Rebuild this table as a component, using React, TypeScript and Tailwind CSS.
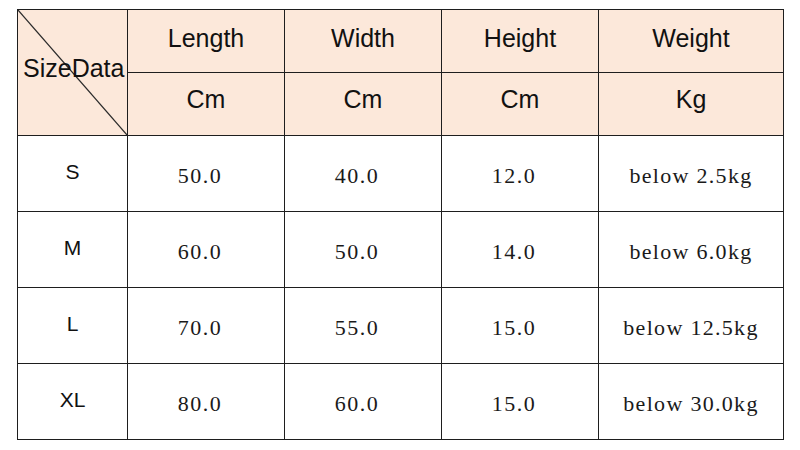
import React from "react";

type Row = { size: string; length: string; width: string; height: string; weight: string };

const rows: Row[] = [
  { size: "S", length: "50.0", width: "40.0", height: "12.0", weight: "below 2.5kg" },
  { size: "M", length: "60.0", width: "50.0", height: "14.0", weight: "below 6.0kg" },
  { size: "L", length: "70.0", width: "55.0", height: "15.0", weight: "below 12.5kg" },
  { size: "XL", length: "80.0", width: "60.0", height: "15.0", weight: "below 30.0kg" },
];

const sans = "font-['Liberation_Sans',Arial,sans-serif]";
const serif = "font-['Liberation_Serif','Times_New_Roman',serif]";

const HeadCell: React.FC<{ children: React.ReactNode; up?: string }> = ({ children, up = "pb-1" }) => (
  <div className={`flex items-center justify-center bg-[#fce8da] text-[25px] text-[#111] ${sans} ${up}`}>
    {children}
  </div>
);

const NumCell: React.FC<{ children: React.ReactNode }> = ({ children }) => (
  <div className={`flex items-center justify-center bg-white pr-3 pt-1 text-[22px] tracking-[1.5px] text-[#1a1a1a] ${serif}`}>
    {children}
  </div>
);

export default function App() {
  return (
    <div className="h-[450px] w-[800px] bg-white pl-[17px] pt-[9px]">
      <div className="grid w-fit grid-cols-[109px_156px_156px_156px_184px] grid-rows-[62px_62px_75px_75px_75px_75px] gap-px bg-[#1e1e1e] p-px">
        {/* corner cell with diagonal */}
        <div className={`relative row-span-2 flex items-center bg-[#fce8da] pb-2 pl-[5px] text-[25px] text-[#111] ${sans}`}>
          <svg className="absolute inset-0 h-full w-full" viewBox="0 0 109 125" preserveAspectRatio="none">
            <line x1="0" y1="0" x2="109" y2="125" stroke="#2a2a2a" strokeWidth="1.2" />
          </svg>
          <span className="relative">SizeData</span>
        </div>
        <HeadCell>Length</HeadCell>
        <HeadCell>Width</HeadCell>
        <HeadCell>Height</HeadCell>
        <HeadCell>Weight</HeadCell>
        <HeadCell up="pb-2">Cm</HeadCell>
        <HeadCell up="pb-2">Cm</HeadCell>
        <HeadCell up="pb-2">Cm</HeadCell>
        <HeadCell up="pb-2">Kg</HeadCell>

        {rows.map((r) => (
          <React.Fragment key={r.size}>
            <div className={`flex items-center justify-center bg-white pb-1 text-[21px] text-[#111] ${sans}`}>
              {r.size}
            </div>
            <NumCell>{r.length}</NumCell>
            <NumCell>{r.width}</NumCell>
            <NumCell>{r.height}</NumCell>
            <div className={`flex items-center justify-center bg-white pt-1 text-[22px] tracking-[1.3px] text-[#1a1a1a] ${serif}`}>
              {r.weight}
            </div>
          </React.Fragment>
        ))}
      </div>
    </div>
  );
}
